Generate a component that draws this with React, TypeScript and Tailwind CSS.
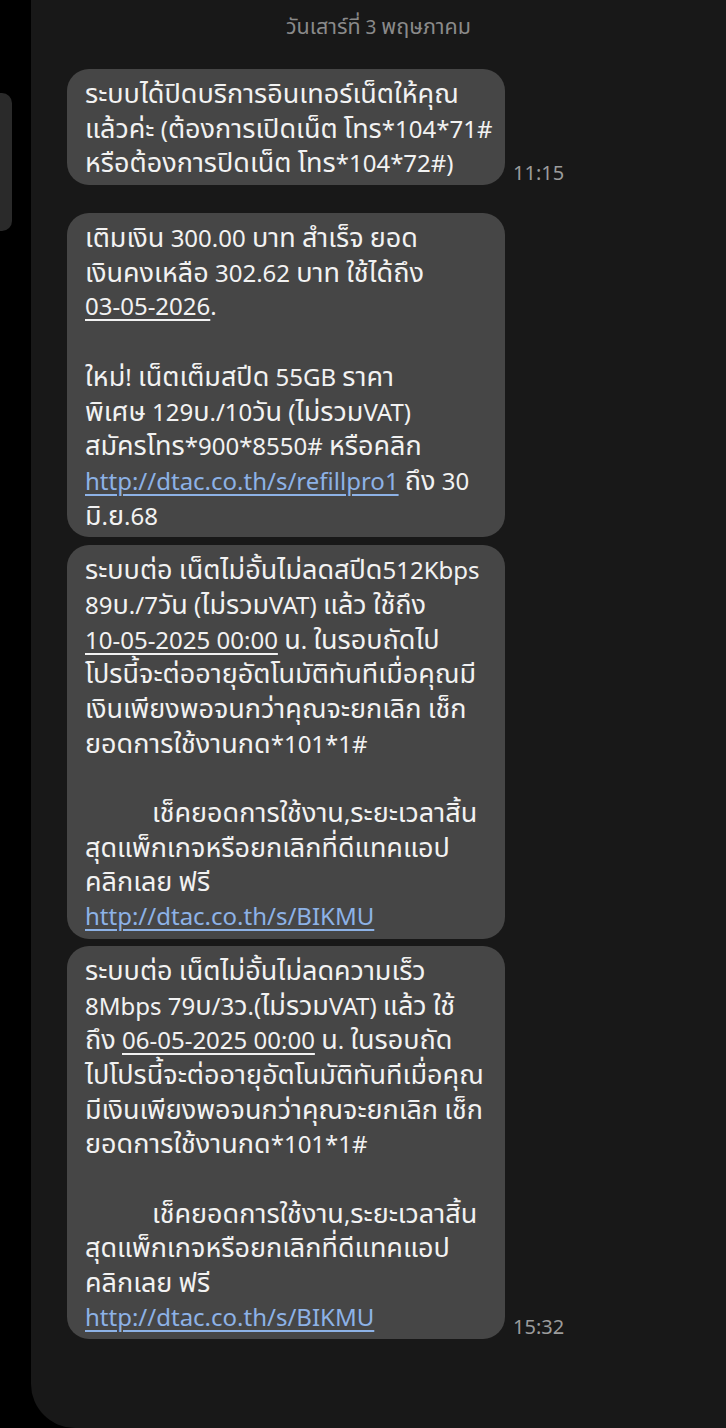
import React from "react";

function th(s: string, big = "text-[27px]"): React.ReactNode[] {
  const parts = s.split(/([\u0E00-\u0E7F]+)/);
  return parts
    .filter((p) => p !== "")
    .map((p, i) =>
      /[\u0E00-\u0E7F]/.test(p) ? (
        <span key={i} className={big}>
          {p}
        </span>
      ) : (
        <React.Fragment key={i}>{p}</React.Fragment>
      )
    );
}

const U = ({ children }: { children: string }) => (
  <span className="underline decoration-[1.5px] underline-offset-[4px]">{children}</span>
);
const L = ({ children }: { children: string }) => (
  <span className="text-[#8db2e6] underline decoration-[1.5px] underline-offset-[4px]">{children}</span>
);

type Line = React.ReactNode;

function Bubble({ lines }: { lines: Line[] }) {
  return (
    <div className="w-[438px] rounded-[22px] bg-[#464646] pl-[18px] pr-[10px] pt-[7px] pb-[5px] text-[24px] leading-[34.7px] text-[#f2f2f2]">
      {lines.map((l, i) => (
        <div key={i} className="h-[34.7px] whitespace-nowrap">
          {l === "" ? "\u00a0" : typeof l === "string" ? th(l) : l}
        </div>
      ))}
    </div>
  );
}

function Time({ t }: { t: string }) {
  return <div className="pb-[1px] pl-[8px] text-[20px] leading-[22px] text-[#9c9c9c]">{t}</div>;
}

const Indent = ({ children }: { children: string }) => (
  <span className="pl-[67px]">{th(children)}</span>
);

export default function App() {
  const b1: Line[] = [
    "ระบบได้ปิดบริการอินเทอร์เน็ตให้คุณ",
    "แล้วค่ะ (ต้องการเปิดเน็ต โทร*104*71#",
    "หรือต้องการปิดเน็ต โทร*104*72#)",
  ];
  const b2: Line[] = [
    "เติมเงิน 300.00 บาท สำเร็จ ยอด",
    "เงินคงเหลือ 302.62 บาท ใช้ได้ถึง",
    <>
      <U>03-05-2026</U>.
    </>,
    "",
    "ใหม่! เน็ตเต็มสปีด 55GB ราคา",
    "พิเศษ 129บ./10วัน (ไม่รวมVAT)",
    "สมัครโทร*900*8550# หรือคลิก",
    <>
      <L>http://dtac.co.th/s/refillpro1</L> {th("ถึง")} 30
    </>,
    "มิ.ย.68",
  ];
  const b3: Line[] = [
    "ระบบต่อ เน็ตไม่อั้นไม่ลดสปีด512Kbps",
    "89บ./7วัน (ไม่รวมVAT) แล้ว ใช้ถึง",
    <>
      <U>10-05-2025 00:00</U> {th("น. ในรอบถัดไป")}
    </>,
    "โปรนี้จะต่ออายุอัตโนมัติทันทีเมื่อคุณมี",
    "เงินเพียงพอจนกว่าคุณจะยกเลิก เช็ก",
    "ยอดการใช้งานกด*101*1#",
    "",
    <Indent>เช็คยอดการใช้งาน,ระยะเวลาสิ้น</Indent>,
    "สุดแพ็กเกจหรือยกเลิกที่ดีแทคแอป",
    "คลิกเลย ฟรี",
    <L>http://dtac.co.th/s/BIKMU</L>,
  ];
  const b4: Line[] = [
    "ระบบต่อ เน็ตไม่อั้นไม่ลดความเร็ว",
    "8Mbps 79บ/3ว.(ไม่รวมVAT) แล้ว ใช้",
    <>
      {th("ถึง")} <U>06-05-2025 00:00</U> {th("น. ในรอบถัด")}
    </>,
    "ไปโปรนี้จะต่ออายุอัตโนมัติทันทีเมื่อคุณ",
    "มีเงินเพียงพอจนกว่าคุณจะยกเลิก เช็ก",
    "ยอดการใช้งานกด*101*1#",
    "",
    <Indent>เช็คยอดการใช้งาน,ระยะเวลาสิ้น</Indent>,
    "สุดแพ็กเกจหรือยกเลิกที่ดีแทคแอป",
    "คลิกเลย ฟรี",
    <L>http://dtac.co.th/s/BIKMU</L>,
  ];

  return (
    <div
      className="flex h-[1428px] w-[726px] overflow-hidden bg-black"
      style={{ fontFamily: '"Noto Sans", "Noto Sans Thai", "Liberation Sans", sans-serif' }}
    >
      <div className="w-[31px] shrink-0 pt-[93px]">
        <div className="h-[138px] w-[12px] rounded-r-[10px] bg-[#2a2a2a]" />
      </div>
      <div className="flex flex-1 flex-col rounded-bl-[44px] bg-[#181818]">
        <div className="pt-[13px] text-center text-[19px] leading-[26px] text-[#8a8a8a]">
          {th("วันเสาร์ที่ 3 พฤษภาคม", "text-[21.5px]")}
        </div>
        <div className="flex flex-col pl-[36px] pt-[29px]">
          <div className="flex items-end">
            <Bubble lines={b1} />
            <Time t="11:15" />
          </div>
          <div className="mt-[28px] flex flex-col">
            <Bubble lines={b2} />
            <div className="mt-[8px]">
              <Bubble lines={b3} />
            </div>
            <div className="mt-[7px] flex items-end">
              <Bubble lines={b4} />
              <Time t="15:32" />
            </div>
          </div>
        </div>
      </div>
    </div>
  );
}
